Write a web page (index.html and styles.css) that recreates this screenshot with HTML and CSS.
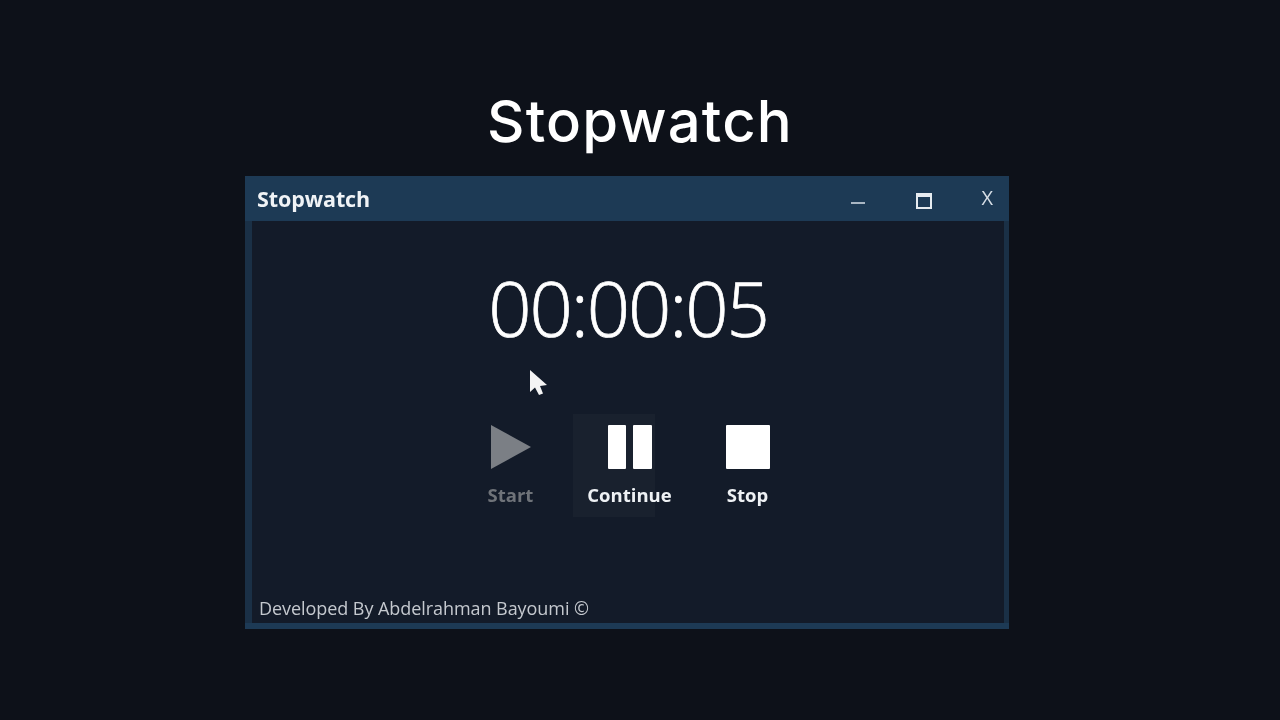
FILE: index.html

```html
<!DOCTYPE html>
<html lang="en">
<head>
  <meta charset="UTF-8">
  <title>Stopwatch</title>
  <link rel="stylesheet" href="styles.css">
</head>
<body>
  <h1 class="page-title">Stopwatch</h1>
  <div class="window">
    <div class="titlebar">
      <span class="app-name">Stopwatch</span>
      <div class="controls">
        <span class="minimize"></span>
        <span class="maximize"></span>
        <span class="close">X</span>
      </div>
    </div>
    <div class="content">
      <div class="timer">00:00:05</div>
      <svg class="cursor" width="19" height="28" viewBox="0 0 19 28">
        <path d="M1 1 L1 23 L6 18.5 L10 26 L14 24.5 L11 17 L18 16 Z" fill="#f4f4f4"/>
      </svg>
      <div class="buttons">
        <div class="btn disabled">
          <svg width="44" height="44" viewBox="0 0 44 44"><path d="M2 0 L42 22 L2 44 Z" fill="#7b7f85"/></svg>
          <span>Start</span>
        </div>
        <div class="btn hovered">
          <svg width="44" height="44" viewBox="0 0 44 44">
            <rect x="0" y="0" width="18" height="44" rx="1" fill="#fff"/>
            <rect x="25" y="0" width="19" height="44" rx="1" fill="#fff"/>
          </svg>
          <span>Continue</span>
        </div>
        <div class="btn stop">
          <svg width="44" height="44" viewBox="0 0 44 44"><rect width="44" height="44" rx="1" fill="#fff"/></svg>
          <span>Stop</span>
        </div>
      </div>
      <div class="footer">Developed By Abdelrahman Bayoumi ©</div>
    </div>
  </div>
</body>
</html>
```

FILE: styles.css

```css
html, body {
  height: 100%;
}
body {
  margin: 0;
  background-color: #0d1119;
  font-family: 'Open Sans', sans-serif;
  display: flex;
  flex-direction: column;
  align-items: center;
  overflow: hidden;
}
.page-title {
  margin: 84px 0 0;
  height: 92px;
  line-height: 74px;
  font-family: 'Inter', sans-serif;
  font-size: 58px;
  font-weight: 500;
  color: #fff;
  letter-spacing: 1.2px;
}
.window {
  width: 764px;
  height: 453px;
  box-sizing: border-box;
  background: #1d3a55;
  padding-bottom: 6px;
  display: flex;
  flex-direction: column;
  margin-right: 26px;
  filter: blur(0.4px);
}
.titlebar {
  height: 45px;
  flex: none;
  display: flex;
  align-items: center;
  justify-content: space-between;
  color: #f0f3f6;
}
.app-name {
  margin-left: 12px;
  font-size: 21.5px;
  font-weight: 700;
  letter-spacing: -0.1px;
}
.controls {
  display: flex;
  align-items: center;
  margin-right: 16px;
}
.minimize {
  width: 14px;
  height: 2px;
  background: #a9b6c3;
  margin-top: 8px;
}
.maximize {
  width: 12px;
  height: 10px;
  border: 2px solid #e6ebf0;
  border-top-width: 4px;
  margin: 4px 0 0 51px;
}
.close {
  margin-left: 49px;
  margin-top: -2px;
  font-size: 20px;
  color: #d6dee6;
}
.content {
  flex: 1;
  position: relative;
  background: #131b29;
  border-left: 7px solid #1a3046;
  border-right: 5px solid #1a3046;
  display: flex;
  flex-direction: column;
  align-items: center;
}
.timer {
  margin-top: 42px;
  height: 92px;
  line-height: 90px;
  font-size: 76px;
  font-weight: 300;
  color: #fff;
  letter-spacing: -2.1px;
  -webkit-text-stroke: 0.7px #fff;
}
.cursor {
  position: absolute;
  left: 277px;
  top: 148px;
}
.buttons {
  margin-top: 70px;
  display: flex;
  margin-left: 2px;
}
.btn {
  width: 119px;
  position: relative;
  display: flex;
  flex-direction: column;
  align-items: center;
  gap: 14px;
  font-size: 18.5px;
  font-weight: 700;
  color: #eef1f4;
}
.btn span {
  line-height: 24px;
}
.btn svg {
  display: block;
}
.stop {
  margin-left: -1px;
}
.disabled {
  color: #6f7379;
}
.hovered::before {
  content: '';
  position: absolute;
  left: 3px;
  top: -11px;
  width: 82px;
  height: 103px;
  background: rgba(255, 255, 255, 0.028);
}
.footer {
  position: absolute;
  left: 7px;
  bottom: 3px;
  font-size: 18px;
  letter-spacing: -0.06px;
  color: #c5c9cf;
}
```
